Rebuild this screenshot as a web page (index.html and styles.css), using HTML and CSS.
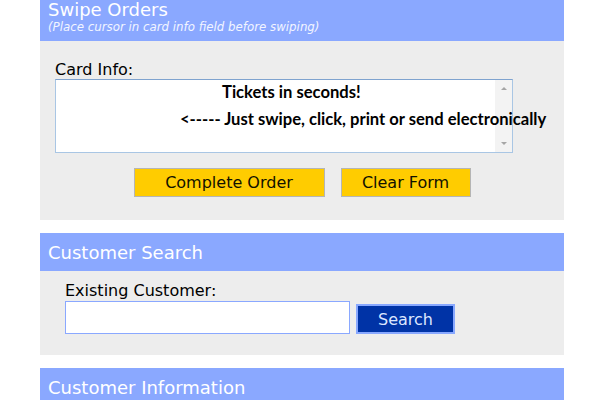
FILE: index.html
```html
<!DOCTYPE html>
<html>
<head>
<meta charset="utf-8">
<link rel="stylesheet" href="styles.css">
</head>
<body>
<div class="page">
  <section class="panel">
    <div class="panel-head head-swipe">
      <div class="head-title">Swipe Orders</div>
      <div class="head-sub">(Place cursor in card info field before swiping)</div>
    </div>
    <div class="panel-body body-swipe">
      <div class="field-label">Card Info:</div>
      <div class="textbox-wrap">
        <div class="textbox">
          <div class="textbox-area"></div>
          <div class="scrollbar">
            <span class="arrow arrow-up"></span>
            <span class="arrow arrow-down"></span>
          </div>
        </div>
        <div class="promo promo-1">Tickets in seconds!</div>
        <div class="promo promo-2">&lt;----- Just swipe, click, print or send electronically</div>
      </div>
      <div class="button-row">
        <button class="btn-yellow btn-complete">Complete Order</button>
        <button class="btn-yellow btn-clear">Clear Form</button>
      </div>
    </div>
  </section>

  <section class="panel">
    <div class="panel-head">Customer Search</div>
    <div class="panel-body body-search">
      <div class="field-label">Existing Customer:</div>
      <div class="search-row">
        <div class="search-input"></div>
        <button class="btn-search">Search</button>
      </div>
    </div>
  </section>

  <section class="panel">
    <div class="panel-head">Customer Information</div>
    <div class="panel-body body-info"></div>
  </section>
</div>
</body>
</html>
```

FILE: styles.css
```css
html, body {
  margin: 0;
  padding: 0;
  background: #ffffff;
}

body {
  font-family: "DejaVu Sans", Verdana, sans-serif;
  color: #000000;
}

.page {
  width: 524px;
  margin-left: 40px;
  display: flex;
  flex-direction: column;
  gap: 13px;
}

.panel {
  display: flex;
  flex-direction: column;
}

.panel-head {
  background: #8aa8ff;
  color: #ffffff;
  font-size: 18px;
  line-height: 21px;
  padding: 9px 8px 8px 8px;
}

.head-swipe {
  padding: 0 8px 7px 8px;
}

.head-title {
  font-size: 18px;
  line-height: 20px;
}

.head-sub {
  font-size: 11.8px;
  line-height: 14px;
  font-style: italic;
  color: #f2f5ff;
}

.panel-body {
  background: #ededed;
}

.body-swipe {
  padding: 19px 15px 23px 15px;
}

.field-label {
  font-size: 16px;
  line-height: 19px;
}

.textbox-wrap {
  position: relative;
  width: 458px;
}

.textbox {
  display: flex;
  height: 72px;
  background: #ffffff;
  border: 1px solid #a9c6e4;
  border-top-color: #7fa3cf;
}

.textbox-area {
  flex: 1;
}

.scrollbar {
  width: 17px;
  background: #f3f3f3;
  display: flex;
  flex-direction: column;
  justify-content: space-between;
  align-items: center;
  padding: 7px 0 7px 0;
}

.arrow {
  width: 0;
  height: 0;
  border-left: 3px solid transparent;
  border-right: 3px solid transparent;
}

.arrow-up {
  border-bottom: 3px solid #a6a6a6;
}

.arrow-down {
  border-top: 3px solid #a6a6a6;
}

.promo {
  position: absolute;
  font-family: "Lato", "Open Sans", sans-serif;
  font-weight: 700;
  font-size: 16.6px;
  line-height: 16px;
  white-space: nowrap;
  color: #000000;
}

.promo-1 {
  left: 167px;
  top: 5px;
}

.promo-2 {
  left: 125px;
  top: 32px;
}

.button-row {
  display: flex;
  justify-content: center;
  gap: 16px;
  margin-top: 15px;
}

.btn-yellow {
  font-family: "DejaVu Sans", Verdana, sans-serif;
  font-size: 16px;
  line-height: 19px;
  height: 29px;
  padding: 0;
  background: #ffcc00;
  color: #111100;
  border: 1px solid #b5b5b5;
}

.btn-complete {
  width: 191px;
}

.btn-clear {
  width: 130px;
}

.body-search {
  padding: 10px 25px 21px 25px;
}

.body-search .field-label {
  line-height: 20px;
}

.search-row {
  display: flex;
  align-items: flex-end;
  gap: 6px;
}

.search-input {
  width: 283px;
  height: 31px;
  background: #ffffff;
  border: 1px solid #8aa8ff;
}

.btn-search {
  width: 99px;
  height: 30px;
  padding: 0;
  font-family: "DejaVu Sans", Verdana, sans-serif;
  font-size: 16px;
  line-height: 19px;
  background: #0033a6;
  color: #dce6ff;
  border: 2px solid #88a8ff;
}

.body-info {
  height: 40px;
}
```
